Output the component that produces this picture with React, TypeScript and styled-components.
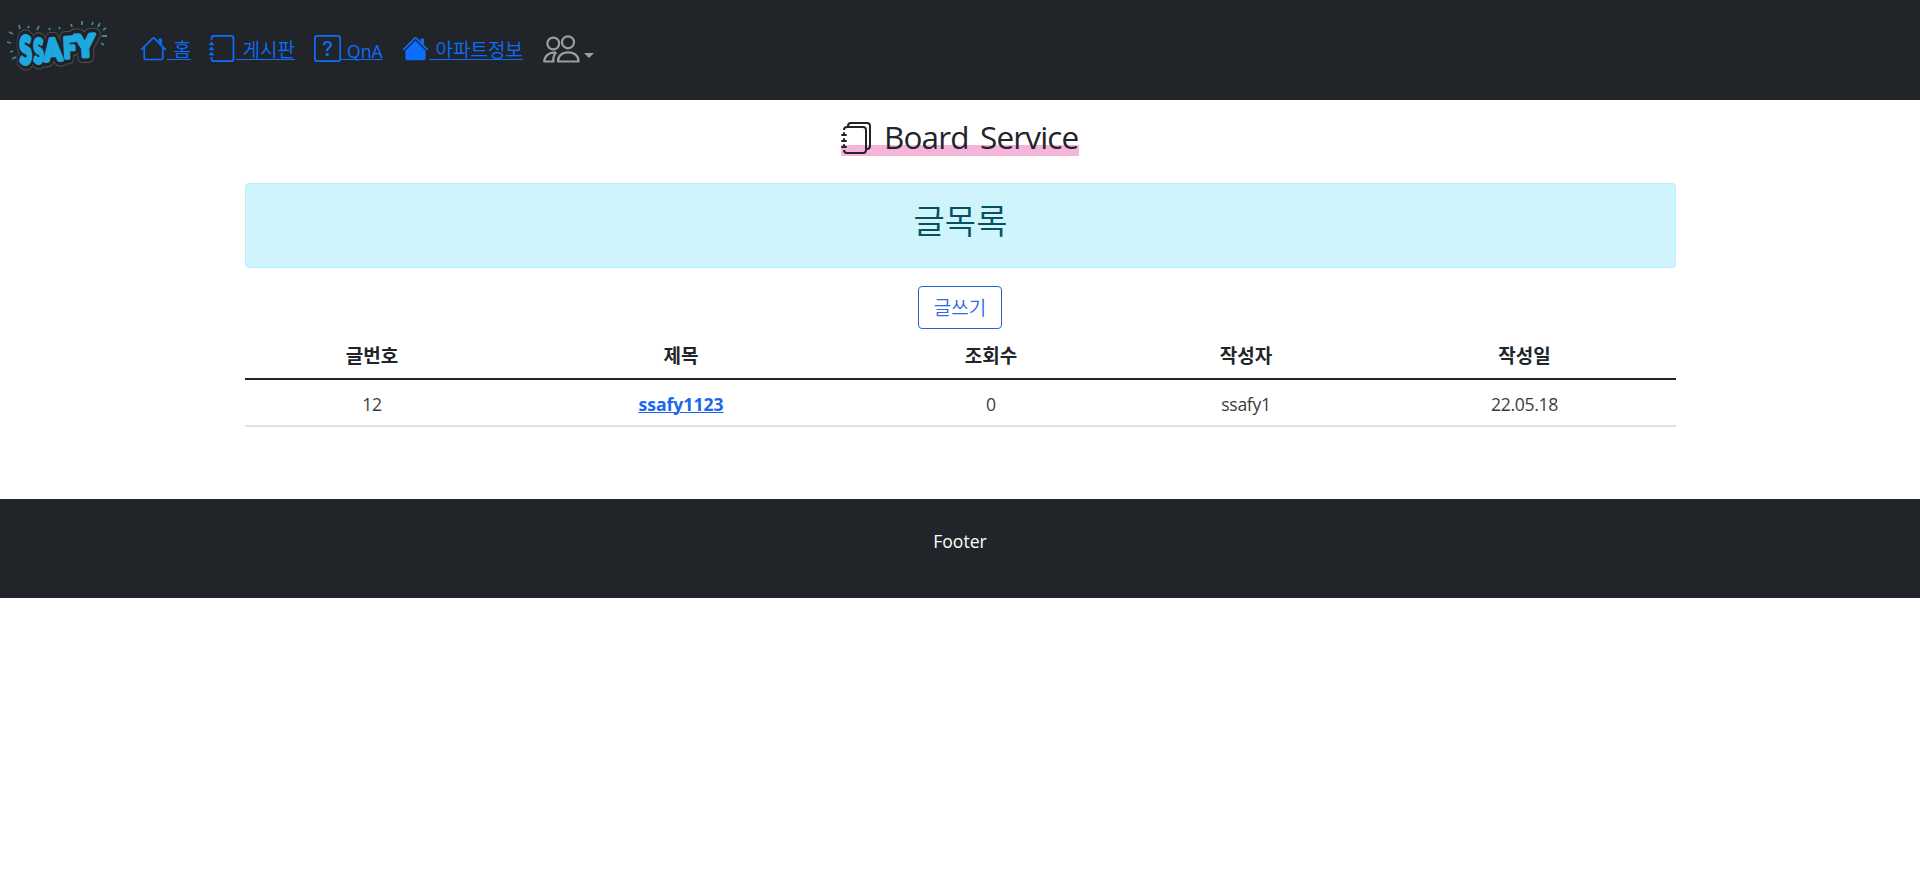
import React from "react";
import styled, { createGlobalStyle } from "styled-components";
import { BsJournal, BsJournals, BsQuestionSquare } from "react-icons/bs";

const Global = createGlobalStyle`
  * { box-sizing: border-box; }
  body {
    margin: 0;
    background: #fff;
    color: #212529;
    font-family: "Open Sans", "Noto Sans CJK KR", sans-serif;
    font-size: 17.6px;
    line-height: 26px;
  }
`;

const Navbar = styled.nav`
  display: flex;
  align-items: flex-start;
  height: 100px;
  background: #212529;
`;

const Brand = styled.a`
  width: 140px;
  height: 100px;
  svg { display: block; }
`;

const Menu = styled.div`
  display: flex;
  gap: 18px;
  padding-top: 35px;
`;

const NavLink = styled.a`
  display: flex;
  height: 28px;
  color: #0d6efd;
  svg { flex: none; width: 27px; height: 27px; }
`;

const NavLabel = styled.span<{ $width: number; $latin?: boolean }>`
  width: ${(p) => p.$width}px;
  padding-top: ${(p) => (p.$latin ? 3 : 2)}px;
  white-space: pre;
  font-size: ${(p) => (p.$latin ? 17.6 : 19)}px;
  font-weight: ${(p) => (p.$latin ? 400 : 350)};
  word-spacing: 1.5px;
  text-decoration: underline;
  text-decoration-thickness: 1px;
  text-underline-offset: ${(p) => (p.$latin ? 1 : 2)}px;
`;

const UserToggle = styled.button`
  display: flex;
  align-items: flex-start;
  gap: 4px;
  padding: 0;
  border: 0;
  background: none;
  color: #9b9d9e;
`;

const Caret = styled.span`
  margin-top: 18px;
  border-top: 5px solid currentColor;
  border-left: 5px solid transparent;
  border-right: 5px solid transparent;
`;

const Container = styled.main`
  width: 1431px;
  margin: 0 0 0 245px;
  height: 399px;
  display: flex;
  flex-direction: column;
  align-items: center;
`;

const Title = styled.h2`
  display: flex;
  align-items: flex-start;
  gap: 12px;
  width: 238px;
  height: 40px;
  margin: 16px 1px 27px 0;
  padding-top: 6px;
  white-space: nowrap;
  font-size: 31.5px;
  font-weight: 400;
  line-height: 30px;
  background: linear-gradient(#f5b5da, #f5b5da) 0 29px / 100% 11px no-repeat;
  svg { flex: none; width: 32px; height: 32px; }
`;

const TitleText = styled.span`
  margin-left: -1px;
  letter-spacing: -0.85px;
  word-spacing: 4px;
`;

const Alert = styled.div`
  width: 100%;
  height: 85px;
  padding-top: 18px;
  border: 1px solid #b6effb;
  border-radius: 4px;
  background: #cff4fc;
  color: #055160;
  text-align: center;
  font-size: 34px;
  font-weight: 350;
  line-height: 38px;
`;

const WriteButton = styled.button`
  width: 84px;
  height: 43px;
  margin: 18px 1px 0 0;
  padding: 0;
  border: 1px solid #2467c4;
  border-radius: 4px;
  background: #fff;
  color: #2f6be0;
  font: inherit;
  font-weight: 350;
  font-size: 19px;
`;

const Table = styled.table`
  width: 100%;
  table-layout: fixed;
  border-collapse: separate;
  border-spacing: 0;
  text-align: center;
`;

const Th = styled.th<{ $width: number }>`
  width: ${(p) => p.$width}px;
  height: 51px;
  padding: 4px 0 0;
  border-bottom: 2px solid #212529;
  font-size: 19px;
  font-weight: 600;
`;

const Td = styled.td`
  height: 47px;
  padding: 2px 0 0;
  border-bottom: 2px solid #dee0e2;
  color: #3a3e42;
  letter-spacing: -0.3px;
`;

const PostLink = styled.a`
  color: #1a68ea;
  font-weight: 700;
  letter-spacing: 0;
  text-decoration: underline;
  text-decoration-thickness: 1px;
  text-underline-offset: 1px;
`;

const Footer = styled.footer`
  height: 99px;
  padding-top: 29px;
  background: #212529;
  color: #fff;
  text-align: center;
`;

const letters = [
  { ch: "S", x: 20, y: 64, r: -2, s: 38, w: 0.58 },
  { ch: "S", x: 34, y: 63, r: -2, s: 33, w: 0.55 },
  { ch: "A", x: 45, y: 61, r: -4, s: 30, w: 0.82 },
  { ch: "F", x: 64, y: 58, r: -3, s: 28, w: 0.78 },
  { ch: "Y", x: 76, y: 57, r: -3, s: 30, w: 0.98 },
];

const sparks = [
  "M19 25l1 4", "M29 26l-1 2", "M39 26l-2 4", "M49 28l1 2", "M59 27l1 2",
  "M71 24l1 3", "M82 21v4", "M93 22l-1 3", "M100 23l-2 4", "M106 28l-3 2",
  "M102 36h5", "M101 43l3 2", "M9 32l4 2", "M7 42l4 1", "M10 52l3-1", "M12 59l4-2",
];

const Logo = () => {
  const draw = (fill: string, stroke: string, width: number) =>
    letters.map((l, i) => (
      <text
        key={i}
        transform={`translate(${l.x} ${l.y}) rotate(${l.r}) scale(${l.w} 1)`}
        fontFamily="Lato, sans-serif"
        fontWeight="900"
        fontSize={l.s}
        fill={fill}
        stroke={stroke}
        strokeWidth={width}
        strokeLinejoin="round"
      >
        {l.ch}
      </text>
    ));
  return (
    <svg width="130" height="100" viewBox="0 0 130 100">
      <g aria-hidden="true">{draw("#504f50", "#504f50", 13)}</g>
      <g aria-hidden="true">{draw("#202226", "#202226", 11)}</g>
      {draw("#1da9df", "#1da9df", 3.8)}
      <path d={sparks.join("")} fill="none" stroke="#3f8798" strokeWidth="1.8" />
    </svg>
  );
};

const chimney = "M13 2.5V6l-2-2V2.5a.5.5 0 0 1 .5-.5h1a.5.5 0 0 1 .5.5z";
const roof =
  "M7.293 1.5a1 1 0 0 1 1.414 0l6.647 6.646a.5.5 0 0 1-.708.708L8 2.207 1.354 8.854a.5.5 0 1 1-.708-.708L7.293 1.5z";

const House = ({ filled }: { filled?: boolean }) => (
  <svg viewBox="0 0 16 16" fill="currentColor">
    <path
      d={
        filled
          ? "m8 3.293 6 6V13.5a1.5 1.5 0 0 1-1.5 1.5h-9A1.5 1.5 0 0 1 2 13.5V9.293l6-6z"
          : "M2 13.5V7h1v6.5a.5.5 0 0 0 .5.5h9a.5.5 0 0 0 .5-.5V7h1v6.5a1.5 1.5 0 0 1-1.5 1.5h-9A1.5 1.5 0 0 1 2 13.5z"
      }
    />
    <path d={chimney} />
    <path d={roof} />
  </svg>
);

const People = () => (
  <svg width="37" height="28" viewBox="0 0 37 28" fill="none" stroke="currentColor" strokeWidth="2.2" strokeLinejoin="round">
    <circle cx="10.3" cy="8.5" r="5.9" />
    <circle cx="25" cy="7.3" r="6" />
    <path d="M12.8 17.4C5.500 17 1.500 21.500 1.200 26.500H10.500C9.900 23 11 19.500 13.400 17.500" />
    <path d="M15 26.500C14.700 21 19 17.300 25.200 17.300S35.800 21 35.500 26.500Z" />
  </svg>
);

const columns = [
  { label: "글번호", width: 254 },
  { label: "제목", width: 364 },
  { label: "조회수", width: 256 },
  { label: "작성자", width: 254 },
  { label: "작성일", width: 303 },
];

export default function App() {
  return (
    <>
      <Global />
      <Navbar>
        <Brand><Logo /></Brand>
        <Menu>
          <NavLink><House /><NavLabel $width={24}> 홈</NavLabel></NavLink>
          <NavLink><BsJournal /><NavLabel $width={60}> 게시판</NavLabel></NavLink>
          <NavLink><BsQuestionSquare /><NavLabel $width={43} $latin> QnA</NavLabel></NavLink>
          <NavLink><House filled /><NavLabel $width={96}> 아파트정보</NavLabel></NavLink>
          <UserToggle><People /><Caret /></UserToggle>
        </Menu>
      </Navbar>
      <Container>
        <Title><BsJournals /><TitleText>Board Service</TitleText></Title>
        <Alert>글목록</Alert>
        <WriteButton>글쓰기</WriteButton>
        <Table>
          <thead>
            <tr>{columns.map((c) => <Th key={c.label} $width={c.width}>{c.label}</Th>)}</tr>
          </thead>
          <tbody>
            <tr>
              <Td>12</Td>
              <Td><PostLink>ssafy1123</PostLink></Td>
              <Td>0</Td>
              <Td>ssafy1</Td>
              <Td>22.05.18</Td>
            </tr>
          </tbody>
        </Table>
      </Container>
      <Footer>Footer</Footer>
    </>
  );
}
